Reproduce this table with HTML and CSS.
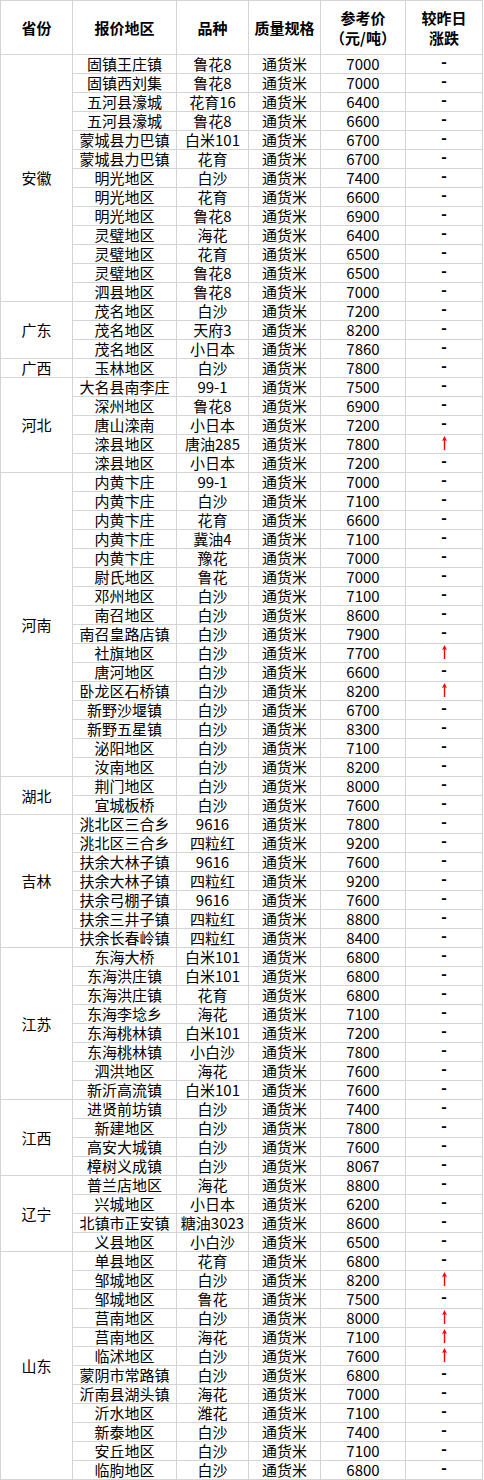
FILE: index.html
```html
<!DOCTYPE html>
<html lang="zh-CN">
<head>
<meta charset="utf-8">
<title>花生米报价</title>
<link rel="stylesheet" href="styles.css">
</head>
<body>
<table class="tbl">
<colgroup>
<col class="w-prov"><col class="w-area"><col class="w-kind"><col class="w-spec"><col class="w-price"><col class="w-chg">
</colgroup>
<thead>
<tr><th>省份</th><th>报价地区</th><th>品种</th><th>质量规格</th><th>参考价<br>（元/吨）</th><th>较昨日<br>涨跌</th></tr>
</thead>
<tbody>
<tr><td class="prov" rowspan="13">安徽</td><td>固镇王庄镇</td><td>鲁花8</td><td>通货米</td><td>7000</td><td>-</td></tr>
<tr><td>固镇西刘集</td><td>鲁花8</td><td>通货米</td><td>7000</td><td>-</td></tr>
<tr><td>五河县濠城</td><td>花育16</td><td>通货米</td><td>6400</td><td>-</td></tr>
<tr><td>五河县濠城</td><td>鲁花8</td><td>通货米</td><td>6600</td><td>-</td></tr>
<tr><td>蒙城县力巴镇</td><td>白米101</td><td>通货米</td><td>6700</td><td>-</td></tr>
<tr><td>蒙城县力巴镇</td><td>花育</td><td>通货米</td><td>6700</td><td>-</td></tr>
<tr><td>明光地区</td><td>白沙</td><td>通货米</td><td>7400</td><td>-</td></tr>
<tr><td>明光地区</td><td>花育</td><td>通货米</td><td>6600</td><td>-</td></tr>
<tr><td>明光地区</td><td>鲁花8</td><td>通货米</td><td>6900</td><td>-</td></tr>
<tr><td>灵璧地区</td><td>海花</td><td>通货米</td><td>6400</td><td>-</td></tr>
<tr><td>灵璧地区</td><td>花育</td><td>通货米</td><td>6500</td><td>-</td></tr>
<tr><td>灵璧地区</td><td>鲁花8</td><td>通货米</td><td>6500</td><td>-</td></tr>
<tr><td>泗县地区</td><td>鲁花8</td><td>通货米</td><td>7000</td><td>-</td></tr>

<tr><td class="prov" rowspan="3">广东</td><td>茂名地区</td><td>白沙</td><td>通货米</td><td>7200</td><td>-</td></tr>
<tr><td>茂名地区</td><td>天府3</td><td>通货米</td><td>8200</td><td>-</td></tr>
<tr><td>茂名地区</td><td>小日本</td><td>通货米</td><td>7860</td><td>-</td></tr>

<tr><td class="prov">广西</td><td>玉林地区</td><td>白沙</td><td>通货米</td><td>7800</td><td>-</td></tr>

<tr><td class="prov" rowspan="5">河北</td><td>大名县南李庄</td><td>99-1</td><td>通货米</td><td>7500</td><td>-</td></tr>
<tr><td>深州地区</td><td>鲁花8</td><td>通货米</td><td>6900</td><td>-</td></tr>
<tr><td>唐山滦南</td><td>小日本</td><td>通货米</td><td>7200</td><td>-</td></tr>
<tr><td>滦县地区</td><td>唐油285</td><td>通货米</td><td>7800</td><td><svg class="up" width="7" height="14" viewBox="0 0 7 14"><path d="M3.5 0 L6 5 L4.2 4.2 L4.2 14 L2.8 14 L2.8 4.2 L1 5 Z"/></svg></td></tr>
<tr><td>滦县地区</td><td>小日本</td><td>通货米</td><td>7200</td><td>-</td></tr>

<tr><td class="prov" rowspan="16">河南</td><td>内黄卞庄</td><td>99-1</td><td>通货米</td><td>7000</td><td>-</td></tr>
<tr><td>内黄卞庄</td><td>白沙</td><td>通货米</td><td>7100</td><td>-</td></tr>
<tr><td>内黄卞庄</td><td>花育</td><td>通货米</td><td>6600</td><td>-</td></tr>
<tr><td>内黄卞庄</td><td>冀油4</td><td>通货米</td><td>7100</td><td>-</td></tr>
<tr><td>内黄卞庄</td><td>豫花</td><td>通货米</td><td>7000</td><td>-</td></tr>
<tr><td>尉氏地区</td><td>鲁花</td><td>通货米</td><td>7000</td><td>-</td></tr>
<tr><td>邓州地区</td><td>白沙</td><td>通货米</td><td>7100</td><td>-</td></tr>
<tr><td>南召地区</td><td>白沙</td><td>通货米</td><td>8600</td><td>-</td></tr>
<tr><td>南召皇路店镇</td><td>白沙</td><td>通货米</td><td>7900</td><td>-</td></tr>
<tr><td>社旗地区</td><td>白沙</td><td>通货米</td><td>7700</td><td><svg class="up" width="7" height="14" viewBox="0 0 7 14"><path d="M3.5 0 L6 5 L4.2 4.2 L4.2 14 L2.8 14 L2.8 4.2 L1 5 Z"/></svg></td></tr>
<tr><td>唐河地区</td><td>白沙</td><td>通货米</td><td>6600</td><td>-</td></tr>
<tr><td>卧龙区石桥镇</td><td>白沙</td><td>通货米</td><td>8200</td><td><svg class="up" width="7" height="14" viewBox="0 0 7 14"><path d="M3.5 0 L6 5 L4.2 4.2 L4.2 14 L2.8 14 L2.8 4.2 L1 5 Z"/></svg></td></tr>
<tr><td>新野沙堰镇</td><td>白沙</td><td>通货米</td><td>6700</td><td>-</td></tr>
<tr><td>新野五星镇</td><td>白沙</td><td>通货米</td><td>8300</td><td>-</td></tr>
<tr><td>泌阳地区</td><td>白沙</td><td>通货米</td><td>7100</td><td>-</td></tr>
<tr><td>汝南地区</td><td>白沙</td><td>通货米</td><td>8200</td><td>-</td></tr>

<tr><td class="prov" rowspan="2">湖北</td><td>荆门地区</td><td>白沙</td><td>通货米</td><td>8000</td><td>-</td></tr>
<tr><td>宜城板桥</td><td>白沙</td><td>通货米</td><td>7600</td><td>-</td></tr>

<tr><td class="prov" rowspan="7">吉林</td><td>洮北区三合乡</td><td>9616</td><td>通货米</td><td>7800</td><td>-</td></tr>
<tr><td>洮北区三合乡</td><td>四粒红</td><td>通货米</td><td>9200</td><td>-</td></tr>
<tr><td>扶余大林子镇</td><td>9616</td><td>通货米</td><td>7600</td><td>-</td></tr>
<tr><td>扶余大林子镇</td><td>四粒红</td><td>通货米</td><td>9200</td><td>-</td></tr>
<tr><td>扶余弓棚子镇</td><td>9616</td><td>通货米</td><td>7600</td><td>-</td></tr>
<tr><td>扶余三井子镇</td><td>四粒红</td><td>通货米</td><td>8800</td><td>-</td></tr>
<tr><td>扶余长春岭镇</td><td>四粒红</td><td>通货米</td><td>8400</td><td>-</td></tr>

<tr><td class="prov" rowspan="8">江苏</td><td>东海大桥</td><td>白米101</td><td>通货米</td><td>6800</td><td>-</td></tr>
<tr><td>东海洪庄镇</td><td>白米101</td><td>通货米</td><td>6800</td><td>-</td></tr>
<tr><td>东海洪庄镇</td><td>花育</td><td>通货米</td><td>6800</td><td>-</td></tr>
<tr><td>东海李埝乡</td><td>海花</td><td>通货米</td><td>7100</td><td>-</td></tr>
<tr><td>东海桃林镇</td><td>白米101</td><td>通货米</td><td>7200</td><td>-</td></tr>
<tr><td>东海桃林镇</td><td>小白沙</td><td>通货米</td><td>7800</td><td>-</td></tr>
<tr><td>泗洪地区</td><td>海花</td><td>通货米</td><td>7600</td><td>-</td></tr>
<tr><td>新沂高流镇</td><td>白米101</td><td>通货米</td><td>7600</td><td>-</td></tr>

<tr><td class="prov" rowspan="4">江西</td><td>进贤前坊镇</td><td>白沙</td><td>通货米</td><td>7400</td><td>-</td></tr>
<tr><td>新建地区</td><td>白沙</td><td>通货米</td><td>7800</td><td>-</td></tr>
<tr><td>高安大城镇</td><td>白沙</td><td>通货米</td><td>7600</td><td>-</td></tr>
<tr><td>樟树义成镇</td><td>白沙</td><td>通货米</td><td>8067</td><td>-</td></tr>

<tr><td class="prov" rowspan="4">辽宁</td><td>普兰店地区</td><td>海花</td><td>通货米</td><td>8800</td><td>-</td></tr>
<tr><td>兴城地区</td><td>小日本</td><td>通货米</td><td>6200</td><td>-</td></tr>
<tr><td>北镇市正安镇</td><td>糖油3023</td><td>通货米</td><td>8600</td><td>-</td></tr>
<tr><td>义县地区</td><td>小白沙</td><td>通货米</td><td>6500</td><td>-</td></tr>

<tr><td class="prov" rowspan="12">山东</td><td>单县地区</td><td>花育</td><td>通货米</td><td>6800</td><td>-</td></tr>
<tr><td>邹城地区</td><td>白沙</td><td>通货米</td><td>8200</td><td><svg class="up" width="7" height="14" viewBox="0 0 7 14"><path d="M3.5 0 L6 5 L4.2 4.2 L4.2 14 L2.8 14 L2.8 4.2 L1 5 Z"/></svg></td></tr>
<tr><td>邹城地区</td><td>鲁花</td><td>通货米</td><td>7500</td><td>-</td></tr>
<tr><td>莒南地区</td><td>白沙</td><td>通货米</td><td>8000</td><td><svg class="up" width="7" height="14" viewBox="0 0 7 14"><path d="M3.5 0 L6 5 L4.2 4.2 L4.2 14 L2.8 14 L2.8 4.2 L1 5 Z"/></svg></td></tr>
<tr><td>莒南地区</td><td>海花</td><td>通货米</td><td>7100</td><td><svg class="up" width="7" height="14" viewBox="0 0 7 14"><path d="M3.5 0 L6 5 L4.2 4.2 L4.2 14 L2.8 14 L2.8 4.2 L1 5 Z"/></svg></td></tr>
<tr><td>临沭地区</td><td>白沙</td><td>通货米</td><td>7600</td><td><svg class="up" width="7" height="14" viewBox="0 0 7 14"><path d="M3.5 0 L6 5 L4.2 4.2 L4.2 14 L2.8 14 L2.8 4.2 L1 5 Z"/></svg></td></tr>
<tr><td>蒙阴市常路镇</td><td>白沙</td><td>通货米</td><td>6800</td><td>-</td></tr>
<tr><td>沂南县湖头镇</td><td>海花</td><td>通货米</td><td>7000</td><td>-</td></tr>
<tr><td>沂水地区</td><td>潍花</td><td>通货米</td><td>7100</td><td>-</td></tr>
<tr><td>新泰地区</td><td>白沙</td><td>通货米</td><td>7400</td><td>-</td></tr>
<tr><td>安丘地区</td><td>白沙</td><td>通货米</td><td>7100</td><td>-</td></tr>
<tr><td>临朐地区</td><td>白沙</td><td>通货米</td><td>6800</td><td>-</td></tr>
</tbody>
</table>
</body>
</html>
```

FILE: styles.css
```css
html, body {
  margin: 0;
  padding: 0;
  background: #ffffff;
}

.tbl {
  border-collapse: separate;
  border-spacing: 0;
  table-layout: fixed;
  width: 483px;
  border-top: 1px solid #d4d4d4;
  border-left: 1px solid #d4d4d4;
  font-family: "Noto Sans CJK SC", "Noto Sans", sans-serif;
  font-size: 15px;
  color: #000;
}

.w-prov { width: 72px; }
.w-area { width: 104px; }
.w-kind { width: 72px; }
.w-spec { width: 72px; }
.w-price { width: 85px; }
.w-chg { width: 77px; }

.tbl th,
.tbl td {
  box-sizing: border-box;
  border-right: 1px solid #d4d4d4;
  border-bottom: 1px solid #d4d4d4;
  padding: 0;
  text-align: center;
  vertical-align: middle;
  white-space: nowrap;
}

.tbl th {
  height: 54px;
  font-weight: 700;
  line-height: 20px;
}

.tbl td {
  height: 19px;
  line-height: 18px;
  font-weight: 400;
}

.tbl td.prov {
  height: auto;
}

.tbl tbody td:last-child {
  font-family: "Liberation Mono", monospace;
  font-weight: 700;
}

.up {
  display: inline-block;
  vertical-align: middle;
  fill: #ff0000;
}
```
